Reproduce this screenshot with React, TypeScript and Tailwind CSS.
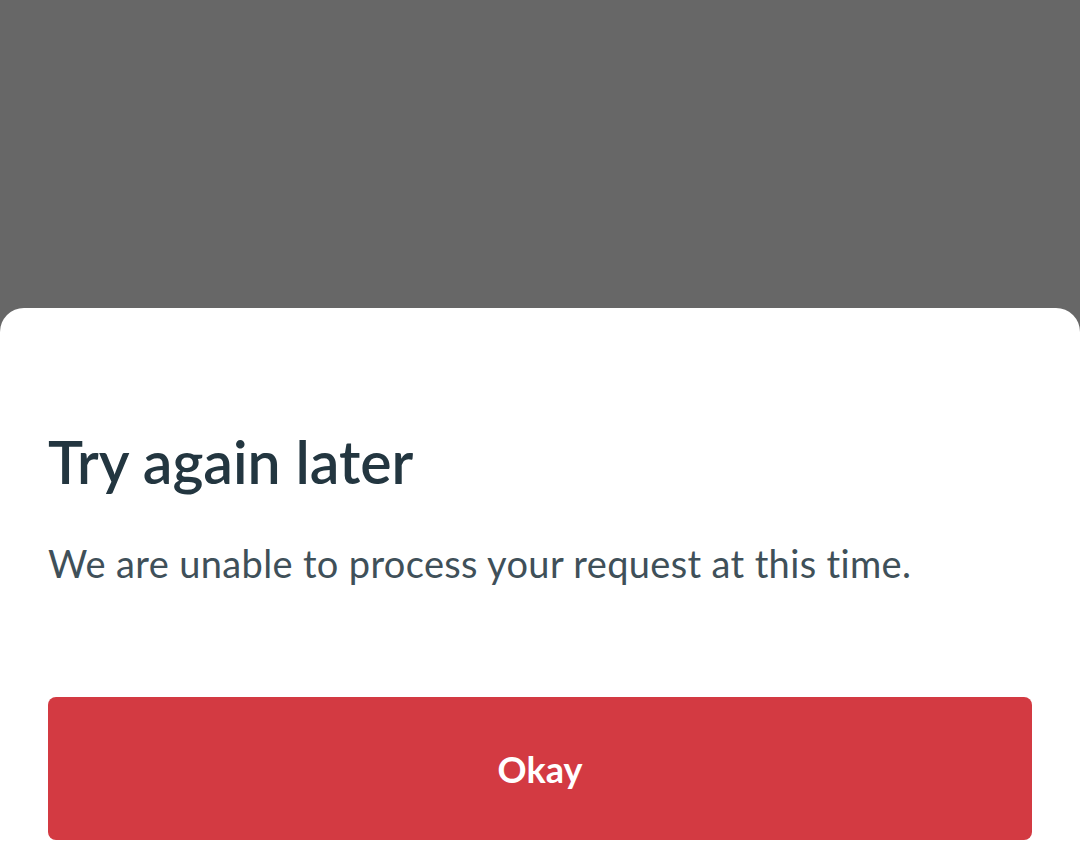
export default function App() {
  return (
    <div
      className="h-[856px] w-[1080px] flex flex-col bg-[#676767] overflow-hidden"
      style={{ fontFamily: "Lato, 'Noto Sans', sans-serif" }}
    >
      <div className="flex-1" />

      <div className="bg-white rounded-t-[24px] px-12 pt-[119px] pb-4 flex flex-col">
        <h1 className="text-[59px] leading-[70px] font-semibold text-[#233640]">
          Try again later
        </h1>

        <p className="mt-[43px] text-[38px] leading-[46px] tracking-[0.35px] text-[#3f5059]">
          We are unable to process your request at this time.
        </p>

        <button className="mt-[111px] h-[143px] w-full rounded-lg bg-[#d33a42] text-white text-[36px] font-bold">
          Okay
        </button>
      </div>
    </div>
  );
}
